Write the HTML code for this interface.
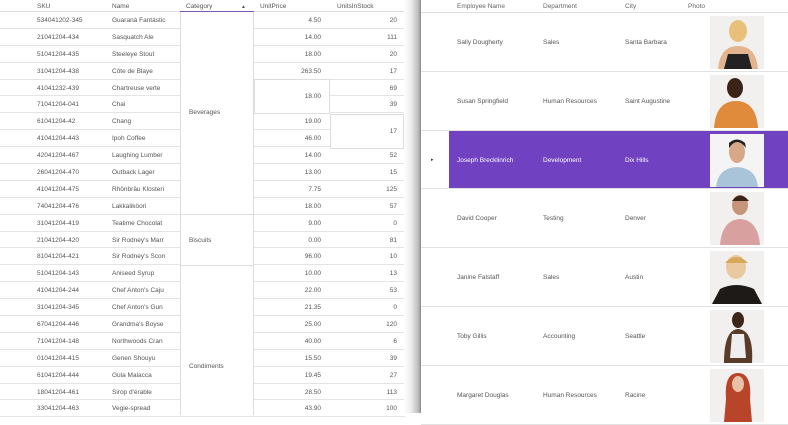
<!DOCTYPE html><html><head><meta charset="utf-8"><style>
*{margin:0;padding:0;box-sizing:border-box}
body{width:788px;height:413px;overflow:hidden;background:#fff;font-family:"Liberation Sans",sans-serif;font-size:6.5px;color:#555;position:relative}
.L{position:absolute;left:0;top:0;width:405px;height:413px}
.hd{position:absolute;top:0;left:0;width:405px;height:12px;border-bottom:1px solid #ddd}
.hd span,.r span{position:absolute;top:3px;white-space:nowrap}
.r{position:relative;height:16.9px;border-bottom:1px solid #e4e4e4}
.r span{top:5px}
.n{text-align:right}
.rows{position:absolute;top:12px;left:0;width:405px}
.box{position:absolute;background:#fff;border:1px solid #ddd}
.sh{position:absolute;left:404px;top:0;width:17px;height:413px;background:linear-gradient(90deg,#fff,#eee 40%,#bbb 85%,#888)}
.R{position:absolute;left:421px;top:0;width:367px;height:413px}
.rh{position:absolute;top:0;left:0;width:367px;height:13px;border-bottom:1px solid #ddd;color:#666}
.rh span{position:absolute;top:3px}
.er{position:absolute;left:0;width:367px;height:58.8px;border-bottom:1.5px solid #e2e2e2}
.er span{position:absolute;top:26px;white-space:nowrap}
.ph{position:absolute;left:289px;top:3px;width:54px;height:53px;background:#f2f0ee}
.sel{background:#fff}
.sel .bg{position:absolute;left:28px;top:0;right:0;bottom:0;background:#7041c1}
.sel span{color:#fff}
</style></head><body>
<div class="L">
<div class="hd"><span style="left:37px">SKU</span><span style="left:112px">Name</span><span style="left:186px">Category</span><span style="left:241px;font-size:5px;top:4px">▲</span><span style="left:260px">UnitPrice</span><span style="left:337px">UnitsInStock</span><div style="position:absolute;left:180px;top:11px;width:74px;height:1.5px;background:#7a5ab8"></div></div>
<div class="rows">
<div class="r"><span style="left:37px">534041202-345</span><span style="left:112px">Guaraná Fantástic</span><span class="n" style="right:84px">4.50</span><span class="n" style="right:8px">20</span></div>
<div class="r"><span style="left:37px">21041204-434</span><span style="left:112px">Sasquatch Ale</span><span style="right:84px">14.00</span><span style="right:8px">111</span></div>
<div class="r"><span style="left:37px">51041204-435</span><span style="left:112px">Steeleye Stout</span><span style="right:84px">18.00</span><span style="right:8px">20</span></div>
<div class="r"><span style="left:37px">31041204-438</span><span style="left:112px">Côte de Blaye</span><span style="right:84px">263.50</span><span style="right:8px">17</span></div>
<div class="r"><span style="left:37px">41041232-439</span><span style="left:112px">Chartreuse verte</span><span style="right:8px">69</span></div>
<div class="r"><span style="left:37px">71041204-041</span><span style="left:112px">Chai</span><span style="right:8px">39</span></div>
<div class="r"><span style="left:37px">61041204-42</span><span style="left:112px">Chang</span><span style="right:84px">19.00</span></div>
<div class="r"><span style="left:37px">41041204-443</span><span style="left:112px">Ipoh Coffee</span><span style="right:84px">46.00</span></div>
<div class="r"><span style="left:37px">42041204-467</span><span style="left:112px">Laughing Lumber</span><span style="right:84px">14.00</span><span style="right:8px">52</span></div>
<div class="r"><span style="left:37px">26041204-470</span><span style="left:112px">Outback Lager</span><span style="right:84px">13.00</span><span style="right:8px">15</span></div>
<div class="r"><span style="left:37px">41041204-475</span><span style="left:112px">Rhönbräu Klosteri</span><span style="right:84px">7.75</span><span style="right:8px">125</span></div>
<div class="r"><span style="left:37px">74041204-476</span><span style="left:112px">Lakkaliköori</span><span style="right:84px">18.00</span><span style="right:8px">57</span></div>
<div class="r"><span style="left:37px">31041204-419</span><span style="left:112px">Teatime Chocolat</span><span style="right:84px">9.00</span><span style="right:8px">0</span></div>
<div class="r"><span style="left:37px">21041204-420</span><span style="left:112px">Sir Rodney's Marr</span><span style="right:84px">0.00</span><span style="right:8px">81</span></div>
<div class="r"><span style="left:37px">81041204-421</span><span style="left:112px">Sir Rodney's Scon</span><span style="right:84px">96.00</span><span style="right:8px">10</span></div>
<div class="r"><span style="left:37px">51041204-143</span><span style="left:112px">Aniseed Syrup</span><span style="right:84px">10.00</span><span style="right:8px">13</span></div>
<div class="r"><span style="left:37px">41041204-244</span><span style="left:112px">Chef Anton's Caju</span><span style="right:84px">22.00</span><span style="right:8px">53</span></div>
<div class="r"><span style="left:37px">31041204-345</span><span style="left:112px">Chef Anton's Gun</span><span style="right:84px">21.35</span><span style="right:8px">0</span></div>
<div class="r"><span style="left:37px">67041204-446</span><span style="left:112px">Grandma's Boyse</span><span style="right:84px">25.00</span><span style="right:8px">120</span></div>
<div class="r"><span style="left:37px">71041204-148</span><span style="left:112px">Northwoods Cran</span><span style="right:84px">40.00</span><span style="right:8px">6</span></div>
<div class="r"><span style="left:37px">01041204-415</span><span style="left:112px">Genen Shouyu</span><span style="right:84px">15.50</span><span style="right:8px">39</span></div>
<div class="r"><span style="left:37px">61041204-444</span><span style="left:112px">Gula Malacca</span><span style="right:84px">19.45</span><span style="right:8px">27</span></div>
<div class="r"><span style="left:37px">18041204-461</span><span style="left:112px">Sirop d'érable</span><span style="right:84px">28.50</span><span style="right:8px">113</span></div>
<div class="r"><span style="left:37px">33041204-463</span><span style="left:112px">Vegie-spread</span><span style="right:84px">43.90</span><span style="right:8px">100</span></div>
</div>
<div class="box" style="left:180px;top:12px;width:74px;height:203px;border-top:none"><span style="position:absolute;left:8px;top:97px">Beverages</span></div>
<div class="box" style="left:180px;top:214px;width:74px;height:52px"><span style="position:absolute;left:8px;top:22px">Biscuits</span></div>
<div class="box" style="left:180px;top:265px;width:74px;height:150px;border-bottom:none"><span style="position:absolute;left:8px;top:97px">Condiments</span></div>
<div class="box" style="left:254px;top:79px;width:76px;height:35px"><span style="position:absolute;right:8px;top:13px">18.00</span></div>
<div class="box" style="left:330px;top:114px;width:74px;height:35px"><span style="position:absolute;right:6px;top:13px">17</span></div>
</div>
<div class="sh"></div>
<div class="R">
<div class="rh"><span style="left:36px">Employee Name</span><span style="left:122px">Department</span><span style="left:204px">City</span><span style="left:267px">Photo</span></div>
<div class="er" style="top:13px"><span style="left:36px">Sally Dougherty</span><span style="left:122px">Sales</span><span style="left:204px">Santa Barbara</span><div class="ph"><svg width="54" height="53"><ellipse cx="28" cy="15" rx="9" ry="11" fill="#e9c07a"/><path d="M8 53 Q10 30 28 30 Q46 30 48 53Z" fill="#e3b48e"/><path d="M14 53 L18 38 L38 38 L42 53Z" fill="#222"/></svg></div></div>
<div class="er" style="top:71.8px"><span style="left:36px">Susan Springfield</span><span style="left:122px">Human Resources</span><span style="left:204px">Saint Augustine</span><div class="ph"><svg width="54" height="53"><ellipse cx="25" cy="13" rx="8" ry="10" fill="#3a2418"/><path d="M4 53 Q6 26 26 26 Q46 26 48 53Z" fill="#e08a3c"/></svg></div></div>
<div class="er sel" style="top:130.6px"><div class="bg"></div><span style="left:10px;color:#333;font-size:5px;top:26px">▸</span><span style="left:36px">Joseph Brecklinrich</span><span style="left:122px">Development</span><span style="left:204px">Dix Hills</span><div class="ph" style="top:3px;background:#f4f4f4"><svg width="54" height="53"><ellipse cx="27" cy="18" rx="8" ry="11" fill="#d7a888"/><path d="M19 14 Q27 2 36 14 L35 9 Q27 2 19 9Z" fill="#222"/><path d="M6 53 Q8 34 27 33 Q46 34 48 53Z" fill="#a9c4d8"/></svg></div></div>
<div class="er" style="top:189.4px"><span style="left:36px">David Cooper</span><span style="left:122px">Testing</span><span style="left:204px">Denver</span><div class="ph"><svg width="54" height="53"><ellipse cx="30" cy="13" rx="8" ry="10" fill="#c69478"/><path d="M22 9 Q30 -2 39 9Z" fill="#3a2418"/><path d="M10 53 Q12 28 30 27 Q48 28 50 53Z" fill="#d9a0a0"/></svg></div></div>
<div class="er" style="top:248.2px"><span style="left:36px">Janine Falstaff</span><span style="left:122px">Sales</span><span style="left:204px">Austin</span><div class="ph"><svg width="54" height="53"><ellipse cx="26" cy="16" rx="10" ry="12" fill="#e9c9a0"/><path d="M15 12 Q26 0 38 12Z" fill="#d7a85a"/><path d="M2 53 L10 38 Q26 30 44 38 L52 53Z" fill="#1d1a18"/></svg></div></div>
<div class="er" style="top:307px"><span style="left:36px">Toby Gillis</span><span style="left:122px">Accounting</span><span style="left:204px">Seattle</span><div class="ph"><svg width="54" height="53"><ellipse cx="28" cy="10" rx="6" ry="8" fill="#3b2618"/><path d="M14 53 Q14 20 28 19 Q44 20 42 53Z" fill="#5a3a28"/><path d="M22 24 L34 24 L36 48 L20 48Z" fill="#eee"/></svg></div></div>
<div class="er" style="top:365.8px"><span style="left:36px">Margaret Douglas</span><span style="left:122px">Human Resources</span><span style="left:204px">Racine</span><div class="ph"><svg width="54" height="53"><path d="M16 30 Q14 4 28 4 Q42 4 40 30 L42 53 L14 53Z" fill="#b8442a"/><ellipse cx="28" cy="15" rx="6" ry="8" fill="#e8c0a8"/></svg></div></div>
</div>
</body></html>
